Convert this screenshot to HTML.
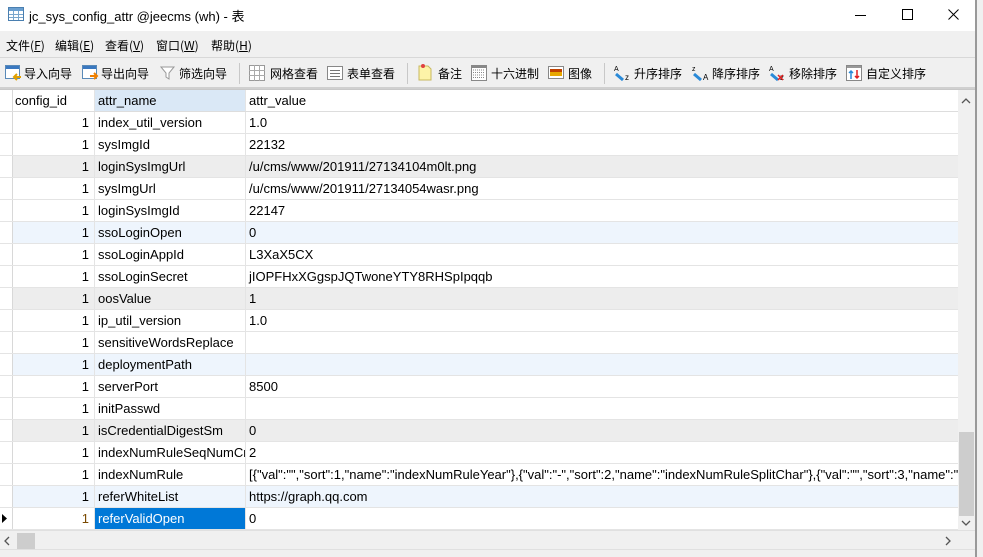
<!DOCTYPE html>
<html><head><meta charset="utf-8"><style>
*{margin:0;padding:0;box-sizing:border-box}
body{width:983px;height:557px;overflow:hidden;background:#f0f0f0;font-family:"Liberation Sans","Noto Sans CJK SC",sans-serif;position:relative}
#win{position:absolute;left:0;top:0;width:977px;height:557px;background:#f0f0f0;border-right:2px solid #999}
#title{position:absolute;left:0;top:0;width:975px;height:31px;background:#fff;font-size:13px}
.abs{position:absolute}
.cj{font-family:"Noto Sans CJK SC",sans-serif;font-size:12px;color:#000;white-space:nowrap}
#grid{position:absolute;left:0;top:89px;width:975px;height:441px;background:#fff;border-top:1px solid #c8c8c8}
.row{position:absolute;left:0;width:958px;height:22px;border-bottom:1px solid #e4e4e4;font-size:13px;color:#000}
.row div{position:absolute;top:0;height:21px;line-height:21px;white-space:nowrap;overflow:hidden}
.c0{left:0;width:13px;border-right:1px solid #d8d8d8;background:#fff}
.c1{left:13px;width:82px;border-right:1px solid #e4e4e4;text-align:right;padding-right:5px}
.c2{left:95px;width:151px;border-right:1px solid #e4e4e4;padding-left:3px}
.c3{left:246px;width:712px;padding-left:3px}
.g{background:#ededed}.b{background:#eef5fd}
.sep{position:absolute;top:63px;width:1px;height:21px;background:#c8c8c8}
</style></head><body>
<div id="win">
<div id="title">
<svg class="abs" style="left:8px;top:7px" width="16" height="14"><rect x="0.5" y="0.5" width="15" height="13" fill="#fff" stroke="#4a7fb0"/><rect x="1" y="1" width="14" height="3" fill="#6a9fd0"/><path d="M1 7.5H15M1 10.5H15M5.5 4V13M10.5 4V13" stroke="#7aa6cc"/></svg>
<span class="abs" style="left:29px;top:6px;font-size:13px;font-family:'Liberation Sans','Noto Sans CJK SC',sans-serif">jc_sys_config_attr @jeecms (wh) - 表</span>
<svg class="abs" style="left:855px;top:9px" width="12" height="12"><path d="M0 6.5H11" stroke="#000"/></svg>
<svg class="abs" style="left:902px;top:9px" width="12" height="12"><rect x="0.5" y="0.5" width="10" height="10" fill="none" stroke="#000"/></svg>
<svg class="abs" style="left:948px;top:9px" width="12" height="12"><path d="M0.5 0.5L10.5 10.5M10.5 0.5L0.5 10.5" stroke="#000"/></svg>
</div>
<div class="cj abs" style="left:6px;top:37px">文件(<u>F</u>)</div>
<div class="cj abs" style="left:55px;top:37px">编辑(<u>E</u>)</div>
<div class="cj abs" style="left:105px;top:37px">查看(<u>V</u>)</div>
<div class="cj abs" style="left:156px;top:37px">窗口(<u>W</u>)</div>
<div class="cj abs" style="left:211px;top:37px">帮助(<u>H</u>)</div>
<div class="abs" style="left:0;top:57px;width:975px;height:1px;background:#d8d8d8"></div>
<svg class="abs" style="left:5px;top:65px" width="17" height="16"><rect x="0.5" y="0.5" width="14" height="13" fill="#fff" stroke="#5a8ab8"/><rect x="1" y="1" width="13" height="3" fill="#3a78c0"/><path d="M9 12h7M12 9l-3 3 3 3" stroke="#e0a000" stroke-width="2" fill="none"/></svg>
<div class="cj abs" style="left:24px;top:65px">导入向导</div>
<svg class="abs" style="left:82px;top:65px" width="17" height="16"><rect x="0.5" y="0.5" width="14" height="13" fill="#fff" stroke="#5a8ab8"/><rect x="1" y="1" width="13" height="3" fill="#3a78c0"/><path d="M8 11h7M12 8l3 3-3 3" stroke="#f08000" stroke-width="2" fill="none"/></svg>
<div class="cj abs" style="left:101px;top:65px">导出向导</div>
<svg class="abs" style="left:160px;top:65px" width="16" height="16"><path d="M1 2h13l-5 6v6l-3-2V8z" fill="#fff" stroke="#999"/></svg>
<div class="cj abs" style="left:179px;top:65px">筛选向导</div>
<div class="sep" style="left:239px"></div>
<svg class="abs" style="left:249px;top:65px" width="16" height="16"><rect x="0.5" y="0.5" width="15" height="15" fill="#fff" stroke="#999"/><path d="M0 5.5H16M0 10.5H16M5.5 0V16M10.5 0V16" stroke="#aaa"/></svg>
<div class="cj abs" style="left:270px;top:65px">网格查看</div>
<svg class="abs" style="left:327px;top:65px" width="16" height="16"><rect x="0.5" y="1.5" width="15" height="13" fill="#fff" stroke="#888"/><path d="M3 5.5H13M3 8.5H13M3 11.5H13" stroke="#777"/></svg>
<div class="cj abs" style="left:347px;top:65px">表单查看</div>
<div class="sep" style="left:407px"></div>
<svg class="abs" style="left:418px;top:63px" width="14" height="18"><path d="M1 3h9l3 3v11H1z" fill="#fdf3a8" stroke="#c8b860"/><circle cx="5" cy="3" r="2" fill="#e04040"/></svg>
<div class="cj abs" style="left:438px;top:65px">备注</div>
<svg class="abs" style="left:471px;top:65px" width="16" height="16"><rect x="0.5" y="0.5" width="15" height="15" fill="#fff" stroke="#888"/><rect x="1" y="1" width="14" height="2" fill="#888"/><path d="M2 5h12M2 7.5h12M2 10h12M2 12.5h12" stroke="#888" stroke-dasharray="1 1"/></svg>
<div class="cj abs" style="left:491px;top:65px">十六进制</div>
<svg class="abs" style="left:548px;top:66px" width="16" height="13"><rect x="0.5" y="0.5" width="15" height="12" fill="#fff" stroke="#888"/><rect x="2" y="3" width="12" height="7" fill="#e8a800"/><rect x="2" y="3" width="12" height="3" fill="#c04000"/></svg>
<div class="cj abs" style="left:568px;top:65px">图像</div>
<div class="sep" style="left:604px"></div>
<svg class="abs" style="left:614px;top:64px" width="18" height="18"><text x="0" y="7" font-size="7" font-family="Liberation Sans">A</text><text x="11" y="16" font-size="8" font-family="Liberation Sans">z</text><path d="M2 10l7 6" stroke="#2a8ad8" stroke-width="3"/></svg>
<div class="cj abs" style="left:634px;top:65px">升序排序</div>
<svg class="abs" style="left:692px;top:64px" width="18" height="18"><text x="0" y="7" font-size="7" font-family="Liberation Sans">z</text><text x="11" y="16" font-size="8" font-family="Liberation Sans">A</text><path d="M2 10l7 6" stroke="#2a8ad8" stroke-width="3"/></svg>
<div class="cj abs" style="left:712px;top:65px">降序排序</div>
<svg class="abs" style="left:769px;top:64px" width="18" height="18"><text x="0" y="7" font-size="7" font-family="Liberation Sans">A</text><text x="11" y="16" font-size="8" font-family="Liberation Sans">z</text><path d="M2 10l7 6" stroke="#2a8ad8" stroke-width="3"/><path d="M9 11l5 5M14 11l-5 5" stroke="#e02020" stroke-width="1.5"/></svg>
<div class="cj abs" style="left:789px;top:65px">移除排序</div>
<svg class="abs" style="left:846px;top:65px" width="16" height="16"><rect x="0.5" y="0.5" width="15" height="15" fill="#fff" stroke="#888"/><rect x="1" y="1" width="14" height="2" fill="#999"/><path d="M5 14V6M3 8l2-2 2 2" stroke="#2a8ad8" stroke-width="1.5" fill="none"/><path d="M11 5v8M9 11l2 2 2-2" stroke="#e02020" stroke-width="1.5" fill="none"/></svg>
<div class="cj abs" style="left:866px;top:65px">自定义排序</div>
<div class="abs" style="left:0;top:87px;width:975px;height:2px;background:#d0d0d0"></div>

<div id="grid">
<div class="row" style="top:0;border-bottom:1px solid #ddd"><div class="c0"></div><div class="c1" style="text-align:left;padding-left:2px">config_id</div><div class="c2" style="background:#dae8f6">attr_name</div><div class="c3">attr_value</div></div>
<div class="row" style="top:22px"><div class="c0"></div><div class="c1">1</div><div class="c2">index_util_version</div><div class="c3">1.0</div></div>
<div class="row" style="top:44px"><div class="c0"></div><div class="c1">1</div><div class="c2">sysImgId</div><div class="c3">22132</div></div>
<div class="row g" style="top:66px"><div class="c0"></div><div class="c1">1</div><div class="c2">loginSysImgUrl</div><div class="c3">/u/cms/www/201911/27134104m0lt.png</div></div>
<div class="row" style="top:88px"><div class="c0"></div><div class="c1">1</div><div class="c2">sysImgUrl</div><div class="c3">/u/cms/www/201911/27134054wasr.png</div></div>
<div class="row" style="top:110px"><div class="c0"></div><div class="c1">1</div><div class="c2">loginSysImgId</div><div class="c3">22147</div></div>
<div class="row b" style="top:132px"><div class="c0"></div><div class="c1">1</div><div class="c2">ssoLoginOpen</div><div class="c3">0</div></div>
<div class="row" style="top:154px"><div class="c0"></div><div class="c1">1</div><div class="c2">ssoLoginAppId</div><div class="c3">L3XaX5CX</div></div>
<div class="row" style="top:176px"><div class="c0"></div><div class="c1">1</div><div class="c2">ssoLoginSecret</div><div class="c3">jIOPFHxXGgspJQTwoneYTY8RHSpIpqqb</div></div>
<div class="row g" style="top:198px"><div class="c0"></div><div class="c1">1</div><div class="c2">oosValue</div><div class="c3">1</div></div>
<div class="row" style="top:220px"><div class="c0"></div><div class="c1">1</div><div class="c2">ip_util_version</div><div class="c3">1.0</div></div>
<div class="row" style="top:242px"><div class="c0"></div><div class="c1">1</div><div class="c2">sensitiveWordsReplace</div><div class="c3"></div></div>
<div class="row b" style="top:264px"><div class="c0"></div><div class="c1">1</div><div class="c2">deploymentPath</div><div class="c3"></div></div>
<div class="row" style="top:286px"><div class="c0"></div><div class="c1">1</div><div class="c2">serverPort</div><div class="c3">8500</div></div>
<div class="row" style="top:308px"><div class="c0"></div><div class="c1">1</div><div class="c2">initPasswd</div><div class="c3"></div></div>
<div class="row g" style="top:330px"><div class="c0"></div><div class="c1">1</div><div class="c2">isCredentialDigestSm</div><div class="c3">0</div></div>
<div class="row" style="top:352px"><div class="c0"></div><div class="c1">1</div><div class="c2">indexNumRuleSeqNumCr</div><div class="c3">2</div></div>
<div class="row" style="top:374px"><div class="c0"></div><div class="c1">1</div><div class="c2">indexNumRule</div><div class="c3">[{"val":"","sort":1,"name":"indexNumRuleYear"},{"val":"-","sort":2,"name":"indexNumRuleSplitChar"},{"val":"","sort":3,"name":"indexNumRuleMonth"}]</div></div>
<div class="row b" style="top:396px"><div class="c0"></div><div class="c1">1</div><div class="c2">referWhiteList</div><div class="c3">https://graph.qq.com</div></div>
<div class="row" style="top:418px"><div class="c0"><svg width="8" height="21"><path d="M2 6l5 4.5-5 4.5z" fill="#000"/></svg></div><div class="c1" style="color:#7a4a00">1</div><div class="c2" style="background:#0078d7;color:#fff">referValidOpen</div><div class="c3">0</div></div>
<div class="abs" style="left:958px;top:0;width:17px;height:441px;background:#f0f0f0"></div>
<svg class="abs" style="left:961px;top:7px" width="10" height="8"><path d="M1 6l4-4 4 4" stroke="#555" fill="none" stroke-width="1.3"/></svg>
<div class="abs" style="left:959px;top:342px;width:15px;height:84px;background:#cdcdcd"></div>
<svg class="abs" style="left:961px;top:429px" width="10" height="8"><path d="M1 2l4 4 4-4" stroke="#555" fill="none" stroke-width="1.3"/></svg>
</div>
<div class="abs" style="left:0;top:530px;width:975px;height:19px;background:#f0f0f0;border-top:1px solid #e0e0e0"></div>
<svg class="abs" style="left:3px;top:536px" width="8" height="10"><path d="M6 1L2 5l4 4" stroke="#555" fill="none" stroke-width="1.3"/></svg>
<div class="abs" style="left:17px;top:533px;width:18px;height:16px;background:#cdcdcd"></div>
<svg class="abs" style="left:944px;top:536px" width="8" height="10"><path d="M2 1l4 4-4 4" stroke="#555" fill="none" stroke-width="1.3"/></svg>
<div class="abs" style="left:0;top:549px;width:975px;height:1px;background:#e0e0e0"></div>
</div>
</body></html>
